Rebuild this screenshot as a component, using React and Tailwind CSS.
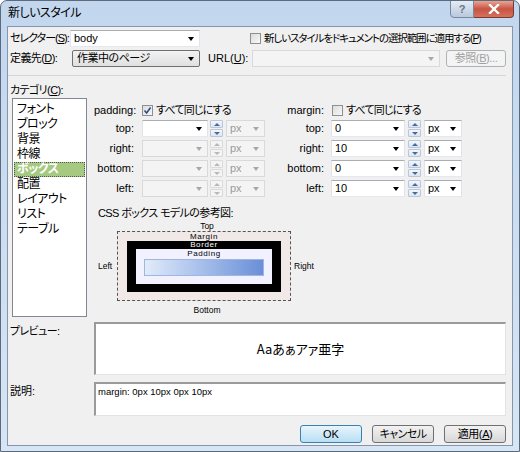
import React from "react";

const Arrow = ({ gray }) => (
  <span
    className={
      gray
        ? "w-0 h-0 border-l-[3.5px] border-r-[3.5px] border-t-[4px] border-l-transparent border-r-transparent border-t-[#a8a8a8]"
        : "w-0 h-0 border-l-[3.5px] border-r-[3.5px] border-t-[4px] border-l-transparent border-r-transparent border-t-black"
    }
  />
);

const Combo = ({ cls, value, disabled, grayArrow }) => (
  <div
    className={
      "h-[17px] flex items-center justify-between pl-[3px] pr-[5px] border " +
      (disabled
        ? "bg-[#f4f4f4] border-[#d9d9d9] text-[#9a9a9a] "
        : "bg-white border-t-[#abadb3] border-l-[#e2e3ea] border-r-[#e2e3ea] border-b-[#e3e9ef] ") +
      cls
    }
  >
    <span className="leading-none">{value}</span>
    <Arrow gray={grayArrow || disabled} />
  </div>
);

const Spin = ({ disabled }) => (
  <div className="w-[13px] h-[17px] flex flex-col gap-[1px]">
    {[0, 1].map((i) => (
      <div
        key={i}
        className={
          "flex-1 flex items-center justify-center border rounded-[1px] " +
          (disabled
            ? "bg-[#f4f4f4] border-[#dadada]"
            : "bg-gradient-to-b from-[#f3f7fc] to-[#dbe6f3] border-[#b9c7d8]")
        }
      >
        {i === 0 ? (
          <span
            className={
              "w-0 h-0 border-l-[3px] border-r-[3px] border-b-[3px] border-l-transparent border-r-transparent " +
              (disabled ? "border-b-[#b8b8b8]" : "border-b-[#4d6a97]")
            }
          />
        ) : (
          <span
            className={
              "w-0 h-0 border-l-[3px] border-r-[3px] border-t-[3px] border-l-transparent border-r-transparent " +
              (disabled ? "border-t-[#b8b8b8]" : "border-t-[#4d6a97]")
            }
          />
        )}
      </div>
    ))}
  </div>
);

const CheckBox = ({ checked }) => (
  <span className="shrink-0 w-[11px] h-[11px] border border-[#8f8f8f] bg-gradient-to-br from-[#dcdcdc] to-[#f8f8f8] flex items-center justify-center">
    {checked && (
      <svg width="9" height="9" viewBox="0 0 9 9">
        <path d="M1.5 4.5 L3.6 7 L7.6 1.5" stroke="#2b4f8c" strokeWidth="1.6" fill="none" />
      </svg>
    )}
  </span>
);

const sides = ["top:", "right:", "bottom:", "left:"];
const marginVals = ["0", "10", "0", "10"];

export default function App() {
  const items = ["フォント", "ブロック", "背景", "枠線", "ボックス", "配置", "レイアウト", "リスト", "テーブル"];
  return (
    <div className="w-[520px] h-[452px] flex flex-col bg-gradient-to-b from-[#c2d6ee] to-[#d7e5f5] border border-[#5c6b7c] rounded-t-[7px] overflow-hidden font-['Liberation_Sans','Noto_Sans_CJK_JP',sans-serif] [font-feature-settings:'palt'] text-[11px] text-black whitespace-nowrap">
      {/* title bar */}
      <div className="h-[25px] flex items-start justify-between shrink-0">
        <div className="pl-[7px] pt-[5px] text-[12px] leading-[14px] tracking-[-0.5px]">新しいスタイル</div>
        <div className="flex mr-[5px] -mt-px">
          <div className="w-[24px] h-[18px] border border-[#7b8898] rounded-bl-[4px] bg-gradient-to-b from-[#e4ecf6] to-[#b9c9dd] flex items-center justify-center text-[#6a7686] text-[11px] font-bold leading-none">
            ?
          </div>
          <div className="w-[40px] h-[18px] border border-[#7a3a34] border-l-0 rounded-br-[4px] bg-gradient-to-b from-[#e8a493] via-[#c75343] to-[#d5705c] flex items-center justify-center">
            <svg width="12" height="10" viewBox="0 0 12 10">
              <path d="M2 1 L10 9 M10 1 L2 9" stroke="#ffffff" strokeWidth="2.4" strokeLinecap="square" />
            </svg>
          </div>
        </div>
      </div>
      {/* body */}
      <div className="mx-[6px] h-[420px] bg-[#f0f0f0] border border-[#8396ad] flex flex-col pr-[6px] shrink-0">
        {/* row 1 */}
        <div className="mt-[3px] h-[17px] flex items-center">
          <div className="w-[62px] pl-[2px] tracking-[-1px]">
            セレクター(<span className="underline">S</span>):
          </div>
          <Combo cls="w-[130px]" value="body" />
          <div className="ml-[50px] flex items-center gap-[3px]">
            <CheckBox />
            <span className="text-[10.5px] tracking-[-1.1px]">
              新しいスタイルをドキュメントの選択範囲に適用する(<span className="underline">P</span>)
            </span>
          </div>
        </div>
        {/* row 2 */}
        <div className="mt-[3px] h-[17px] flex items-center">
          <div className="w-[64px] pl-[2px] tracking-[-0.6px]">
            定義先(<span className="underline">D</span>):
          </div>
          <div className="w-[128px] h-[17px] flex items-center justify-between pl-[4px] pr-[5px] border border-[#707070] rounded-[2px] bg-gradient-to-b from-[#f2f2f2] to-[#e0e0e0]">
            <span className="tracking-[-0.5px]">作業中のページ</span>
            <Arrow />
          </div>
          <div className="w-[44px] ml-[8px]">
            URL(<span className="underline">U</span>):
          </div>
          <div className="w-[188px] h-[17px] flex items-center justify-end pr-[5px] border border-[#d9d9d9] bg-[#f4f4f4]">
            <Arrow gray />
          </div>
          <div className="ml-[6px] w-[60px] h-[17px] flex items-center justify-center border border-[#adb2b5] rounded-[3px] bg-[#f4f4f4] text-[#a0a0a0] tracking-[-0.4px]">
            参照(<span className="underline">B</span>)...
          </div>
        </div>
        {/* separator */}
        <div className="mt-[8px] h-px bg-[#d3d7dc] w-[498px]" />
        <div className="mt-[8px] h-[12px] pl-[2px] leading-[12px] tracking-[-0.6px]">
          カテゴリ(<span className="underline">C</span>):
        </div>
        {/* main */}
        <div className="mt-[2px] flex h-[219px]">
          <div className="ml-[4px] w-[75px] h-[219px] border border-[#828790] bg-white pt-[3px] px-px text-[12px] tracking-[-0.5px]">
            {items.map((t) =>
              t === "ボックス" ? (
                <div
                  key={t}
                  className="h-[15px] leading-[13px] pl-[2px] bg-[#a6c982] text-white font-bold border border-dotted border-[#555]"
                >
                  {t}
                </div>
              ) : (
                <div key={t} className="h-[15px] leading-[15px] pl-[3px]">
                  {t}
                </div>
              )
            )}
          </div>
          <div className="ml-[7px] flex flex-col">
            <div className="flex">
              {/* padding */}
              <div className="flex flex-col">
                <div className="mt-[6px] h-[13px] flex items-center">
                  <div className="w-[40px] text-right">padding:</div>
                  <div className="ml-[8px] flex items-center gap-[3px]">
                    <CheckBox checked />
                    <span className="tracking-[-0.8px]">すべて同じにする</span>
                  </div>
                </div>
                <div className="mt-[3px] flex flex-col gap-[3px]">
                  {sides.map((s, i) => (
                    <div key={s} className="h-[17px] flex items-center">
                      <div className="w-[40px] text-right">{s}</div>
                      <Combo cls="ml-[8px] w-[66px]" value="" disabled={i > 0} />
                      <div className="ml-[2px]">
                        <Spin disabled={i > 0} />
                      </div>
                      <Combo cls="ml-[3px] w-[39px]" value="px" disabled />
                    </div>
                  ))}
                </div>
              </div>
              {/* margin */}
              <div className="ml-[19px] flex flex-col">
                <div className="mt-[6px] h-[13px] flex items-center">
                  <div className="w-[40px] text-right">margin:</div>
                  <div className="ml-[8px] flex items-center gap-[3px]">
                    <CheckBox />
                    <span className="tracking-[-0.8px]">すべて同じにする</span>
                  </div>
                </div>
                <div className="mt-[3px] flex flex-col gap-[3px]">
                  {sides.map((s, i) => (
                    <div key={s} className="h-[17px] flex items-center">
                      <div className="w-[40px] text-right">{s}</div>
                      <Combo cls="ml-[7px] w-[74px]" value={marginVals[i]} />
                      <div className="ml-[3px]">
                        <Spin />
                      </div>
                      <Combo cls="ml-[3px] w-[38px]" value="px" />
                    </div>
                  ))}
                </div>
              </div>
            </div>
            {/* box model */}
            <div className="mt-[10px] pl-[4px] h-[13px] leading-[13px] tracking-[-0.6px]">CSS ボックス モデルの参考図:</div>
            <div className="mt-[1px] flex flex-col items-start pl-[4px] text-[8.5px] leading-none">
              <div className="w-[214px] flex justify-center pl-[4px] h-[10px] items-center">Top</div>
              <div className="flex items-center">
                <div className="w-[19px]">Left</div>
                <div className="w-[174px] h-[70px] border border-dashed border-[#555] bg-[#f1e8e8] flex flex-col items-center px-[9px] tracking-[0.6px] text-[8px]">
                  <div className="h-[9px] leading-[9px]">Margin</div>
                  <div className="w-full h-[51px] bg-black flex flex-col items-center px-[9px] pb-[8px]">
                    <div className="h-[8px] leading-[8px] text-white">Border</div>
                    <div className="w-full flex-1 bg-[#f1f1ff] flex flex-col items-center px-[8px]">
                      <div className="h-[10px] leading-[10px]">Padding</div>
                      <div className="w-full h-[17px] border border-[#9fb5e2] bg-gradient-to-r from-[#e1ebf9] to-[#6a8fd7]" />
                    </div>
                  </div>
                </div>
                <div className="ml-[3px]">Right</div>
              </div>
              <div className="w-[214px] flex justify-center pl-[4px] mt-[5px]">Bottom</div>
            </div>
          </div>
        </div>
        {/* preview */}
        <div className="mt-[5px] flex h-[53px]">
          <div className="w-[86px] pl-[2px] pt-[1px] tracking-[-0.6px]">プレビュー:</div>
          <div className="w-[412px] h-[53px] bg-white border-t-2 border-l-2 border-r border-b border-t-[#9a9a9a] border-l-[#9a9a9a] border-r-[#e3e3e3] border-b-[#e3e3e3] flex items-center justify-center text-[13px] font-['Noto_Sans_CJK_JP',sans-serif] [font-feature-settings:'normal']">
            Aaあぁアァ亜字
          </div>
        </div>
        {/* description */}
        <div className="mt-[7px] flex h-[34px]">
          <div className="w-[86px] pl-[2px] pt-[1px]">説明:</div>
          <div className="w-[412px] h-[34px] bg-white border-t-2 border-l-2 border-r border-b border-t-[#9a9a9a] border-l-[#9a9a9a] border-r-[#e3e3e3] border-b-[#e3e3e3] pl-[2px] pt-[2px] text-[9.5px] leading-[12px]">
            margin: 0px 10px 0px 10px
          </div>
        </div>
        {/* buttons */}
        <div className="mt-[9px] flex justify-end gap-[10px] h-[18px]">
          <div className="w-[62px] h-[18px] flex items-center justify-center border border-[#3c7fb1] rounded-[3px] bg-gradient-to-b from-[#e8f5fc] to-[#b8def4]">
            OK
          </div>
          <div className="w-[62px] h-[18px] flex items-center justify-center border border-[#707070] rounded-[3px] bg-gradient-to-b from-[#f2f2f2] to-[#d8d8d8] tracking-[-0.6px]">
            キャンセル
          </div>
          <div className="w-[62px] h-[18px] flex items-center justify-center border border-[#707070] rounded-[3px] bg-gradient-to-b from-[#f2f2f2] to-[#d8d8d8] tracking-[-0.4px]">
            適用(<span className="underline">A</span>)
          </div>
        </div>
      </div>
    </div>
  );
}
